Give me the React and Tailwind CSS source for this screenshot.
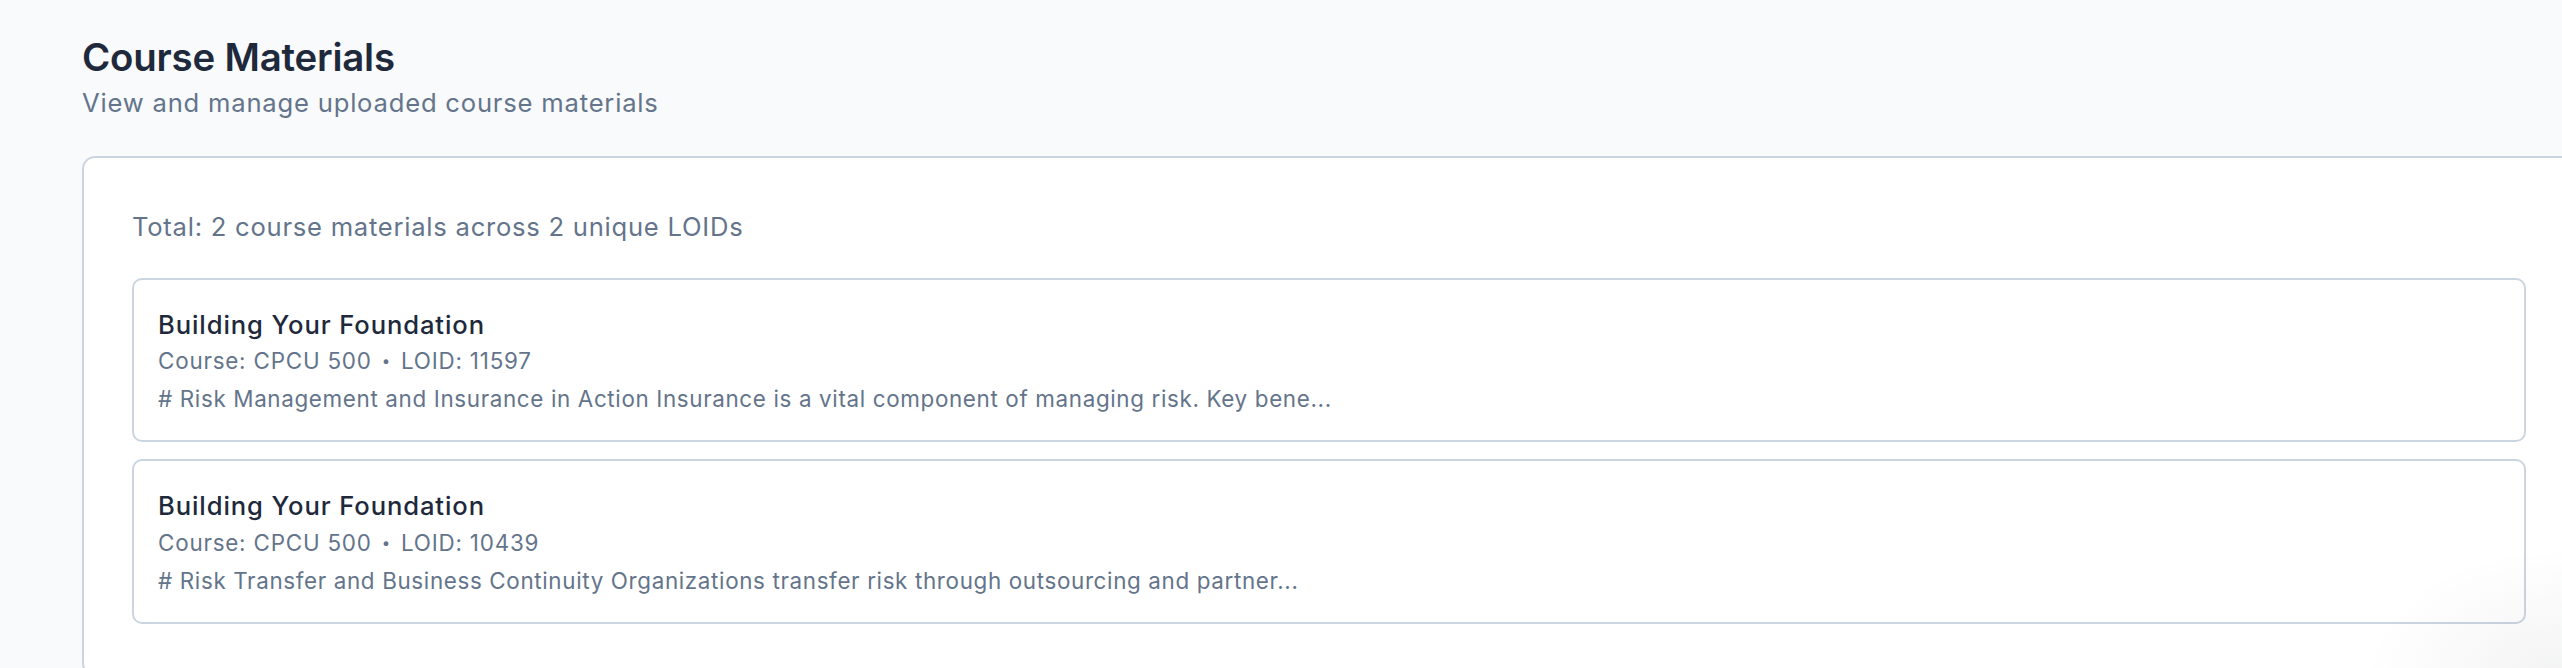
import React from "react";

const materials = [
  {
    title: "Building Your Foundation",
    course: "CPCU 500",
    loid: "11597",
    excerpt:
      "# Risk Management and Insurance in Action Insurance is a vital component of managing risk. Key bene...",
  },
  {
    title: "Building Your Foundation",
    course: "CPCU 500",
    loid: "10439",
    excerpt:
      "# Risk Transfer and Business Continuity Organizations transfer risk through outsourcing and partner...",
  },
];

export default function App() {
  return (
    <div
      className="relative min-h-screen w-full overflow-hidden bg-[#f8fafc] pl-[82px] pt-[32px]"
      style={{ fontFamily: "Inter, 'Noto Sans', sans-serif" }}
    >
      <h1 className="text-[38.4px] leading-[51px] font-semibold tracking-[-0.2px] text-[#1e293b]">
        Course Materials
      </h1>
      <p className="mt-[1px] text-[25.6px] leading-[38.4px] tracking-[0.8px] text-[#64748b]">
        View and manage uploaded course materials
      </p>

      <div className="mt-[34px] w-[2494px] rounded-[13px] border-2 border-[#cbd5e1] bg-white px-[48px] pt-[50px] pb-[50px]">
        <p className="text-[25.6px] leading-[38.4px] tracking-[0.75px] text-[#64748b]">
          Total: 2 course materials across 2 unique LOIDs
        </p>
        <div className="mt-[31px] flex flex-col gap-[17px]">
          {materials.map((m) => (
            <div
              key={m.loid}
              className="rounded-[10px] border-2 border-[#cbd5e1] bg-white px-[24px] pt-[26px] pb-[25px]"
            >
              <h3 className="text-[25.6px] leading-[38.4px] font-medium tracking-[0.9px] text-[#1e293b]">
                {m.title}
              </h3>
              <p className="mt-[1px] flex items-center text-[22.4px] leading-[32px] tracking-[0.8px] text-[#64748b]">
                <span>Course: {m.course}</span>
                <span className="mx-[10px] text-[15px] leading-[32px]">•</span>
                <span>LOID: {m.loid}</span>
              </p>
              <p className="mt-[6px] text-[22.4px] leading-[32px] tracking-[0.65px] text-[#64748b]">
                {m.excerpt}
              </p>
            </div>
          ))}
        </div>
      </div>

      <div className="pointer-events-none absolute bottom-0 right-0 h-[130px] w-[200px] bg-[radial-gradient(ellipse_at_bottom_right,rgba(15,23,42,0.05),rgba(15,23,42,0)_70%)]" />
    </div>
  );
}
